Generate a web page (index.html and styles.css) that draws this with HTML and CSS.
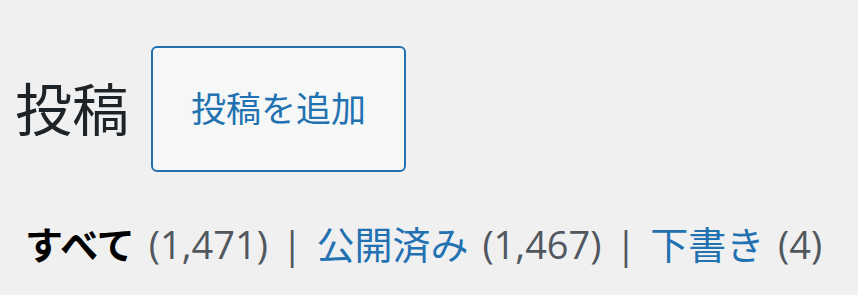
FILE: index.html
```html
<!DOCTYPE html>
<html lang="ja">
<head>
    <meta charset="UTF-8">
    <meta name="viewport" content="width=device-width, initial-scale=1.0">
    <title>投稿</title>
    <link rel="stylesheet" href="styles.css">
</head>
<body>

    <div class="wrap">
        <div class="page-header">
            <h1 class="page-title">投稿</h1>
            <a href="#" class="page-title-action">投稿を追加</a>
        </div>

        <ul class="subsubsub">
            <li class="all"><a href="#" class="current">すべて <span class="count">(1,471)</span></a> |</li>
            <li class="publish"><a href="#">公開済み <span class="count">(1,467)</span></a> |</li>
            <li class="draft"><a href="#">下書き <span class="count">(4)</span></a></li>
        </ul>
    </div>

</body>
</html>
```

FILE: styles.css
```css
body {
    margin: 0;
    padding: 0;
    background: #f0f0f1;
    color: #1d2327;
    font-family: "Open Sans", "Noto Sans CJK JP", sans-serif;
}

.wrap {
    padding: 46px 0 0 15px;
}

.page-header {
    display: flex;
    align-items: center;
    gap: 22px;
}

.page-title {
    margin: 0;
    font-size: 57px;
    font-weight: 400;
    line-height: 1.2;
    color: #1d2327;
}

.page-title-action {
    display: inline-block;
    padding: 36px 38px;
    font-size: 35px;
    line-height: 50px;
    color: #2271b1;
    background: #f6f7f7;
    border: 2px solid #2271b1;
    border-radius: 6px;
    text-decoration: none;
    white-space: nowrap;
}

.subsubsub {
    list-style: none;
    margin: 45px 0 0 10px;
    padding: 0;
    font-size: 38px;
    line-height: 54px;
    word-spacing: 4px;
    color: #50575e;
}

.subsubsub li {
    display: inline;
}

.subsubsub a {
    color: #2271b1;
    text-decoration: none;
}

.subsubsub a.current {
    color: #000;
    font-weight: 600;
}

.subsubsub .count {
    color: #50575e;
    font-weight: 400;
}
```
